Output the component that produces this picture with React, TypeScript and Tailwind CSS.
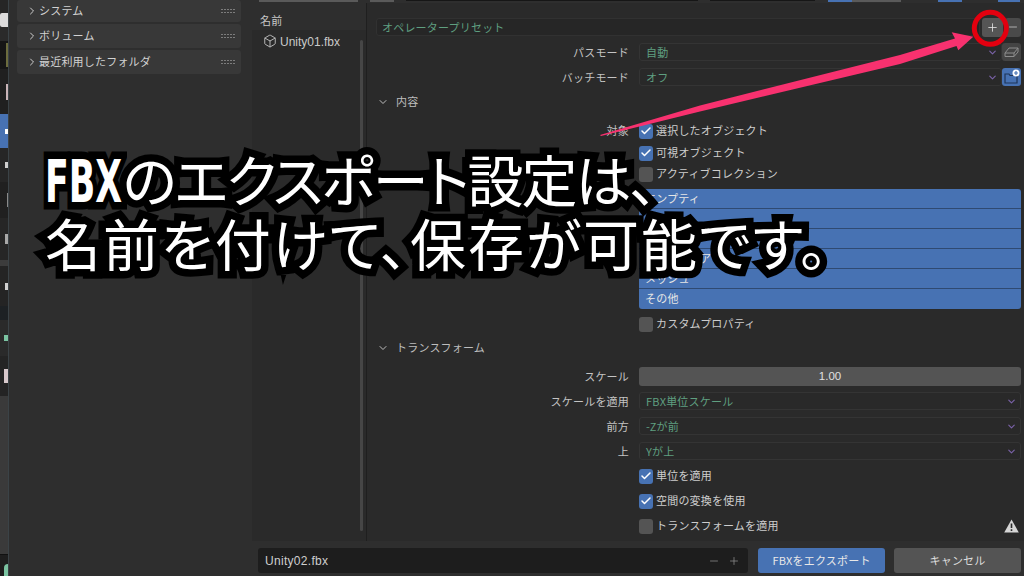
import React from 'react';
import { Box, Check, ChevronDown, ChevronRight, Minus, Plus } from 'lucide-react';

const jpFont = "font-['Noto_Sans_CJK_JP','Noto_Sans',sans-serif]";

const Grip = () => (
  <div className="grid grid-cols-5 gap-x-[1px] gap-y-[2px] ml-auto mr-[6px]">
    {Array.from({ length: 10 }).map((_, i) => (
      <div key={i} className="w-[2px] h-[1px] bg-[#7c7c7c]" />
    ))}
  </div>
);

const SidePanel = ({ label, className }: { label: string; className: string }) => (
  <div className={`flex items-center bg-[#383838] rounded-[3px] text-[11px] text-[#d2d2d2] pl-[9px] ${className}`}>
    <ChevronRight className="w-[12px] h-[12px] mr-[1px] text-[#cfcfcf]" strokeWidth={2} />
    <span className="tracking-[0.2px] mb-[2px]">{label}</span>
    <Grip />
  </div>
);

const Label = ({ children }: { children?: React.ReactNode }) => (
  <div className="w-[253px] mr-[10px] text-right text-[11px] text-[#c4c4c4] tracking-[0.2px]">{children}</div>
);

const Select = ({ value }: { value: string }) => (
  <div className="flex-1 h-full flex items-center bg-[#292929] border border-[#343434] rounded-[3px] pl-[6px] pr-[3px] text-[11px] text-[#5f9f80] tracking-[0.2px]">
    <span>{value}</span>
    <ChevronDown className="ml-auto w-[11px] h-[11px] text-[#7a62a8]" strokeWidth={2.5} />
  </div>
);

const Option = ({ label, value, className }: { label: string; value: string; className: string }) => (
  <div className={`flex items-center h-[18px] pr-[3px] ${className}`}>
    <Label>{label}</Label>
    <Select value={value} />
  </div>
);

const CheckRow = ({ title, label, on, className, children }: { title?: string; label: string; on?: boolean; className: string; children?: React.ReactNode }) => (
  <div className={`flex items-center h-[16px] pr-[3px] text-[11px] text-[#cdcdcd] tracking-[0.2px] ${className}`}>
    <div className="mb-[2px]">
      <Label>{title}</Label>
    </div>
    <div className={`w-[14px] h-[15px] mr-[3px] rounded-[3px] flex items-center justify-center ${on ? 'bg-[#4772b3]' : 'bg-[#545454]'}`}>
      {on && <Check className="w-[12px] h-[12px] text-white" strokeWidth={3} />}
    </div>
    <span className="mb-[2px]">{label}</span>
    {children}
  </div>
);

const Section = ({ label, className }: { label: string; className: string }) => (
  <div className={`flex items-center h-[18px] text-[11px] text-[#bdbdbd] tracking-[0.2px] ${className}`}>
    <ChevronDown className="w-[12px] h-[12px] mr-[7px] ml-[1px]" strokeWidth={2} />
    <span className="mb-[1px]">{label}</span>
  </div>
);

const kinds = ['エンプティ', 'カメラ', 'ランプ', 'アーマチュア', 'メッシュ', 'その他'];

// cropped edge of the neighbouring editor, only a few pixels are visible
const LeftStrip = () => (
  <div className="w-[9px] shrink-0 flex flex-col border-r border-[#3b4347] bg-[#1d1d1d]">
    <div className="h-[13px] bg-[#262626]" />
    <div className="h-[14px] bg-[#dcdcdc] rounded-l-[2px]" />
    <div className="h-[14px] bg-[#2a2a2a]" />
    <div className="h-[28px] bg-[#161616] flex justify-end"><div className="w-[2px] h-[24px] mt-[2px] bg-[#6c6c3e]" /></div>
    <div className="h-[45px] bg-[#202020] flex justify-end items-center"><div className="w-[2px] h-[16px] bg-[#c9b4b8]" /></div>
    <div className="h-[34px] bg-[#4772b3] flex justify-end items-center"><div className="w-[3px] h-[5px] bg-white" /></div>
    <div className="h-[34px] bg-[#262626] flex justify-end items-center"><div className="w-[3px] h-[6px] bg-[#cfcfcf]" /></div>
    <div className="h-[36px] bg-[#202020] flex justify-end items-center"><div className="w-[1px] h-[14px] bg-[#8a8a8a]" /></div>
    <div className="h-[42px] bg-[#262626] flex justify-end items-center"><div className="w-[3px] h-[10px] bg-[#a8a8a8]" /></div>
    <div className="h-[6px] bg-[#3c3c3c]" />
    <div className="h-[40px] bg-[#242424] flex justify-end items-center"><div className="w-[3px] h-[7px] bg-[#cfcfcf]" /></div>
    <div className="h-[14px] bg-[#1d2124]" />
    <div className="h-[36px] bg-[#2a2a2a] flex justify-end items-center"><div className="w-[4px] h-[6px] bg-[#7bc4a2]" /></div>
    <div className="h-[40px] bg-[#242424] flex justify-end items-center"><div className="w-[4px] h-[14px] bg-[#d8c9cc]" /></div>
    <div className="flex-1 bg-[#3a3a3a]" />
    <div className="h-[22px] bg-[#1e1e1e] border-t border-[#111111] flex justify-end items-end"><div className="w-[4px] h-[12px] rounded-tl-[4px] bg-[#7bc4a2]" /></div>
  </div>
);

const TopStrip = () => (
  <div className="h-[3px] flex items-start shrink-0">
    <div className="w-[9px]" />
    <div className="w-[99px] h-[2px] bg-[#5a5a5a]" />
    <div className="w-[12px]" />
    <div className="w-[24px] h-[2px] bg-[#5a5a5a]" />
    <div className="w-[12px]" />
    <div className="w-[292px] h-[1px] bg-[#161616]" />
    <div className="w-[12px]" />
    <div className="w-[105px] h-[1px] bg-[#161616]" />
    <div className="w-[13px]" />
    <div className="w-[24px] h-[2px] bg-[#4772b3]" />
    <div className="w-[49px] h-[2px] bg-[#5a5a5a]" />
    <div className="w-[37px]" />
    <div className="w-[24px] h-[2px] bg-[#4772b3]" />
    <div className="w-[36px]" />
    <div className="w-[22px] h-[2px] bg-[#4772b3]" />
  </div>
);

export default function App() {
  return (
    <div className={`relative w-[1024px] h-[576px] overflow-hidden flex bg-[#2e2e2e] ${jpFont}`}>
      <LeftStrip />

      {/* bookmarks side */}
      <div className="w-[241px] shrink-0 pl-[8px] pr-[9px] flex flex-col">
        <SidePanel label="システム" className="h-[22px]" />
        <SidePanel label="ボリューム" className="h-[24px] mt-[2px]" />
        <SidePanel label="最近利用したフォルダ" className="h-[24px] mt-[2px]" />
      </div>

      <div className="flex-1 flex flex-col min-w-0">
        <TopStrip />
        <div className="h-[538px] flex">
          {/* file list */}
          <div className="w-[116px] shrink-0 flex flex-col">
            <div className="h-[27px] pl-[10px] flex items-end text-[11px] text-[#c8c8c8] tracking-[0.2px] pb-[2px]">名前</div>
            <div className="flex-1 flex bg-[#2a2a2a] ml-[2px]">
              <div className="flex-1 flex items-start pl-[11px] pt-[3px] text-[12px] text-[#c9c9c9]">
                <Box className="w-[14px] h-[14px] mr-[3px] mt-[1px]" strokeWidth={1.5} />
                <span className="font-['Liberation_Sans',sans-serif]">Unity01.fbx</span>
              </div>
              <div className="w-[3px] my-[10px] mr-[3px] bg-[#464646] rounded-full" />
            </div>
          </div>

          {/* operator options */}
          <div className="flex-1 bg-[#2a2a2a] border-l border-[#1f1f1f] pl-[9px]">
            <div className="flex items-center h-[18px] mt-[15px] pr-[3px]">
              <div className="flex-1 h-full flex items-center bg-[#262626] border border-[#313131] rounded-[3px] pl-[5px] text-[11px] text-[#5f9f80] tracking-[0.2px]">
                オペレータープリセット
              </div>
              <div className="w-[21px] h-[19px] ml-[2px] rounded-[3px] bg-[#555555] flex items-center justify-center">
                <Plus className="w-[13px] h-[13px] text-[#e4e4e4]" strokeWidth={1.5} />
              </div>
              <div className="w-[16px] h-[19px] ml-[2px] rounded-[3px] bg-[#4a4a4a] flex items-center justify-center">
                <Minus className="w-[12px] h-[12px] text-[#cfcfcf]" strokeWidth={1.5} />
              </div>
            </div>

            <div className="flex items-center h-[18px] mt-[7px] pr-[3px]">
              <Label>パスモード</Label>
              <Select value="自動" />
              <div className="w-[19px] h-[18px] rounded-[3px] bg-[#444444] flex items-center justify-center">
                <svg width="15" height="12" viewBox="0 0 15 12" fill="none" stroke="#8d8d8d" strokeWidth="1">
                  <path d="M1 7 L5 2 H14 L10 7 Z M1 7 V10.5 H10 V7 M10 10.5 L14 6 V2" />
                </svg>
              </div>
            </div>
            <div className="flex items-center h-[18px] mt-[7px] pr-[3px]">
              <Label>バッチモード</Label>
              <Select value="オフ" />
              <div className="w-[19px] h-[18px] rounded-[3px] bg-[#4772b3] flex items-center justify-center">
                <svg width="17" height="16" viewBox="0 0 17 16" fill="none">
                  <path d="M2 5 H6 L7 6.5 H14 V14 H2 Z" stroke="#1f3558" strokeWidth="1.2" />
                  <circle cx="13" cy="4" r="3.5" fill="#ffffff" />
                  <path d="M11 4 H15 M13 2 V6" stroke="#4772b3" strokeWidth="1.2" />
                </svg>
              </div>
            </div>

            <Section label="内容" className="mt-[7px]" />
            <CheckRow title="対象" label="選択したオブジェクト" on className="mt-[12px]" />
            <CheckRow label="可視オブジェクト" on className="mt-[6px]" />
            <CheckRow label="アクティブコレクション" className="mt-[5px]" />

            <div className="ml-[263px] mr-[3px] mt-[7px] h-[120px] rounded-[3px] bg-[#4772b3] flex flex-col text-[11px] text-[#e6e6e6] tracking-[0.2px] overflow-hidden">
              {kinds.map((k, i) => (
                <div key={k} className={`h-[20px] pl-[6px] pb-[1px] flex items-center ${i < 5 ? 'border-b border-[#2f4a72]' : ''}`}>{k}</div>
              ))}
            </div>

            <CheckRow label="カスタムプロパティ" className="mt-[7px]" />
            <Section label="トランスフォーム" className="mt-[7px]" />

            <div className="flex items-center h-[19px] mt-[10px] pr-[3px]">
              <Label>スケール</Label>
              <div className="flex-1 h-full rounded-[3px] bg-[#545454] flex items-center justify-center text-[11.5px] text-[#e0e0e0] font-['Liberation_Sans',sans-serif]">1.00</div>
            </div>
            <Option label="スケールを適用" value="FBX単位スケール" className="mt-[6px]" />
            <Option label="前方" value="-Zが前" className="mt-[7px]" />
            <Option label="上" value="Yが上" className="mt-[7px]" />

            <CheckRow label="単位を適用" on className="mt-[8px]" />
            <CheckRow label="空間の変換を使用" on className="mt-[9px]" />
            <CheckRow label="トランスフォームを適用" className="mt-[9px]">
              <svg className="ml-auto mr-[2px]" width="15" height="14" viewBox="0 0 15 14">
                <path d="M7.5 0.5 L14.8 13.5 H0.2 Z" fill="#d6d6d6" />
                <path d="M7.5 4.5 V9 M7.5 10.3 V12" stroke="#2a2a2a" strokeWidth="1.6" />
              </svg>
            </CheckRow>
          </div>
        </div>

        {/* footer */}
        <div className="flex-1 flex items-start pt-[7px] pl-[8px] pr-[3px]">
          <div className="w-[490px] h-[25px] rounded-[3px] bg-[#1d1d1d] flex items-center pl-[7px] pr-[8px] text-[12px] text-[#cfcfcf]">
            <span className="font-['Liberation_Sans',sans-serif] tracking-[0.3px]">Unity02.fbx</span>
            <Minus className="ml-auto w-[12px] h-[12px] text-[#8d8d8d]" strokeWidth={1.5} />
            <Plus className="ml-[8px] w-[12px] h-[12px] text-[#8d8d8d]" strokeWidth={1.5} />
          </div>
          <div className="w-[127px] h-[25px] ml-[10px] rounded-[3px] bg-[#4772b3] flex items-center justify-center text-[11px] text-[#e8e8e8] tracking-[0.2px]">FBXをエクスポート</div>
          <div className="w-[127px] h-[25px] ml-[9px] rounded-[3px] bg-[#545454] flex items-center justify-center text-[11px] text-[#dcdcdc] tracking-[0.2px]">キャンセル</div>
        </div>
      </div>

      {/* annotation arrow and ring */}
      <svg className="absolute left-0 top-0 pointer-events-none" width="1024" height="576" viewBox="0 0 1024 576">
        <path d="M600 135 L700 105.5 L900 55 L955 38.5 L951.7 32.3 L973.3 36.7 L958.3 50.3 L956.5 46 L900 64 L700 111.5 L601 136 Z" fill="#f8316f" />
        <circle cx="990.3" cy="28.3" r="16" fill="none" stroke="#e3000f" strokeWidth="5" />
      </svg>

      {/* caption */}
      <div className="absolute left-[45px] top-[148px] text-white font-normal leading-[60px] [paint-order:stroke_fill] [-webkit-text-stroke:15px_black] whitespace-nowrap [font-feature-settings:'palt']">
        <div className="h-[64px] text-[56px]">
          <span className="inline-block font-['DejaVu_Sans',sans-serif] font-bold text-[58px] origin-left scale-x-[0.6] mr-[-51px]">FBX</span>
          <span className="tracking-[-2px]">のエクスポート設定は、</span>
        </div>
        <div className="text-[56px] tracking-[2px]">名前を付けて、保存が可能です。</div>
      </div>
    </div>
  );
}
